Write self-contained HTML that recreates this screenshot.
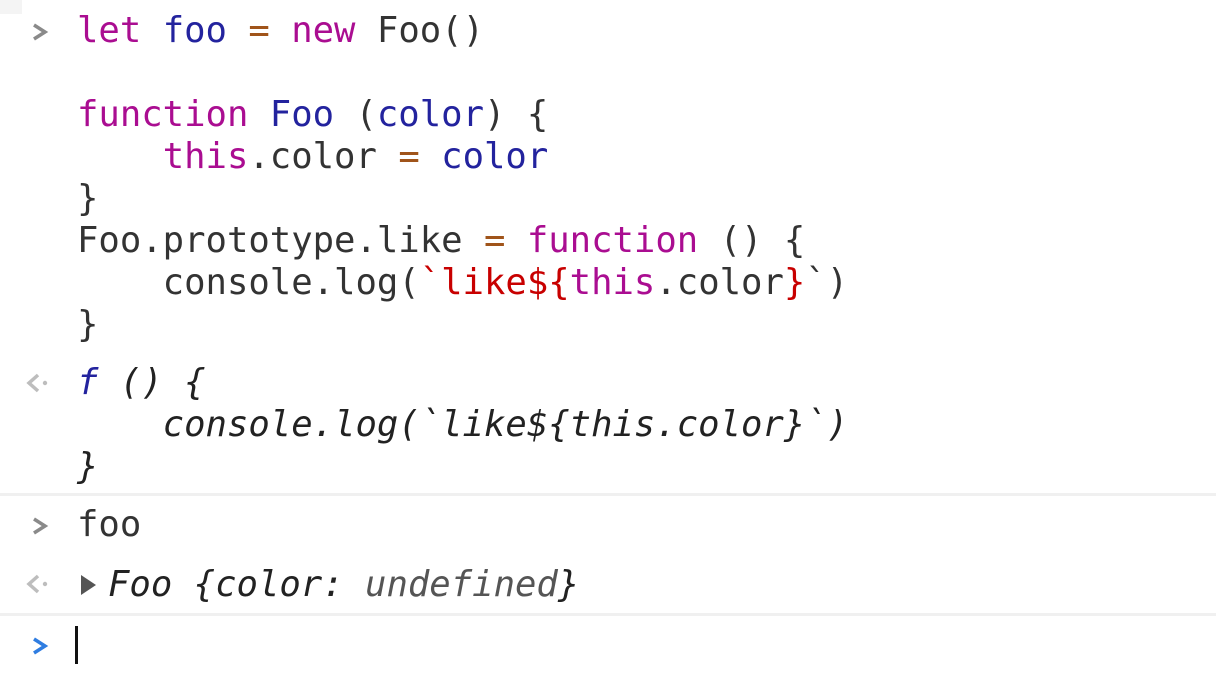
<!DOCTYPE html>
<html><head><meta charset="utf-8"><style>
html,body{margin:0;padding:0;background:#fff;width:1216px;height:696px;overflow:hidden;position:relative}
.l{position:absolute;left:77px;height:42px;line-height:42px;font-family:"DejaVu Sans Mono","Liberation Mono",monospace;font-size:35.6px;color:#333;white-space:pre}
.k{color:#aa0d91}.v{color:#23239e}.o{color:#a0541a}.s{color:#c80000}
.i{font-style:italic;color:#222}
.sep{position:absolute;left:0;width:1216px;height:3px;background:#f0f0f0}
svg{position:absolute}
</style></head><body>
<div style="position:absolute;left:0;top:0;width:22px;height:14px;background:#f4f4f4"></div>
<svg style="left:30px;top:21px" width="20" height="22"><path d="M4 4 L15 11 L4 18" fill="none" stroke="#8a8a8a" stroke-width="3.5"/></svg>
<div class="l" style="top:10px"><span class="k">let</span> <span class="v">foo</span> <span class="o">=</span> <span class="k">new</span> Foo()</div>
<div class="l" style="top:94px"><span class="k">function</span> <span class="v">Foo</span> (<span class="v">color</span>) {</div>
<div class="l" style="top:136px">    <span class="k">this</span>.color <span class="o">=</span> <span class="v">color</span></div>
<div class="l" style="top:178px">}</div>
<div class="l" style="top:220px">Foo.prototype.like <span class="o">=</span> <span class="k">function</span> () {</div>
<div class="l" style="top:262px">    console.log(<span class="s">`like${</span><span class="k">this</span>.color<span class="s">}</span>`)</div>
<div class="l" style="top:304px">}</div>
<svg style="left:25px;top:371px" width="28" height="24"><path d="M13 4 L4 12 L13 20" fill="none" stroke="#bdbdbd" stroke-width="3.5"/><circle cx="20" cy="12" r="2.2" fill="#bdbdbd"/></svg>
<div class="l i" style="top:362px"><span style="color:#23239e">f</span> () {</div>
<div class="l i" style="top:404px">    console.log(`like${this.color}`)</div>
<div class="l i" style="top:446px">}</div>
<div class="sep" style="top:493px"></div>
<svg style="left:30px;top:515px" width="20" height="22"><path d="M4 4 L15 11 L4 18" fill="none" stroke="#8a8a8a" stroke-width="3.5"/></svg>
<div class="l" style="top:504px">foo</div>
<svg style="left:25px;top:572px" width="28" height="24"><path d="M13 4 L4 12 L13 20" fill="none" stroke="#bdbdbd" stroke-width="3.5"/><circle cx="20" cy="12" r="2.2" fill="#bdbdbd"/></svg>
<svg style="left:80px;top:574px" width="18" height="22"><path d="M1 1 L16 11 L1 21 Z" fill="#555"/></svg>
<div class="l i" style="top:564px;left:108px">Foo {color: <span style="color:#555">undefined</span>}</div>
<div class="sep" style="top:613px"></div>
<svg style="left:30px;top:635px" width="20" height="22"><path d="M4 4 L15 11 L4 18" fill="none" stroke="#2f7de1" stroke-width="3.5"/></svg>
<div style="position:absolute;left:75px;top:626px;width:3px;height:38px;background:#111"></div>
</body></html>
